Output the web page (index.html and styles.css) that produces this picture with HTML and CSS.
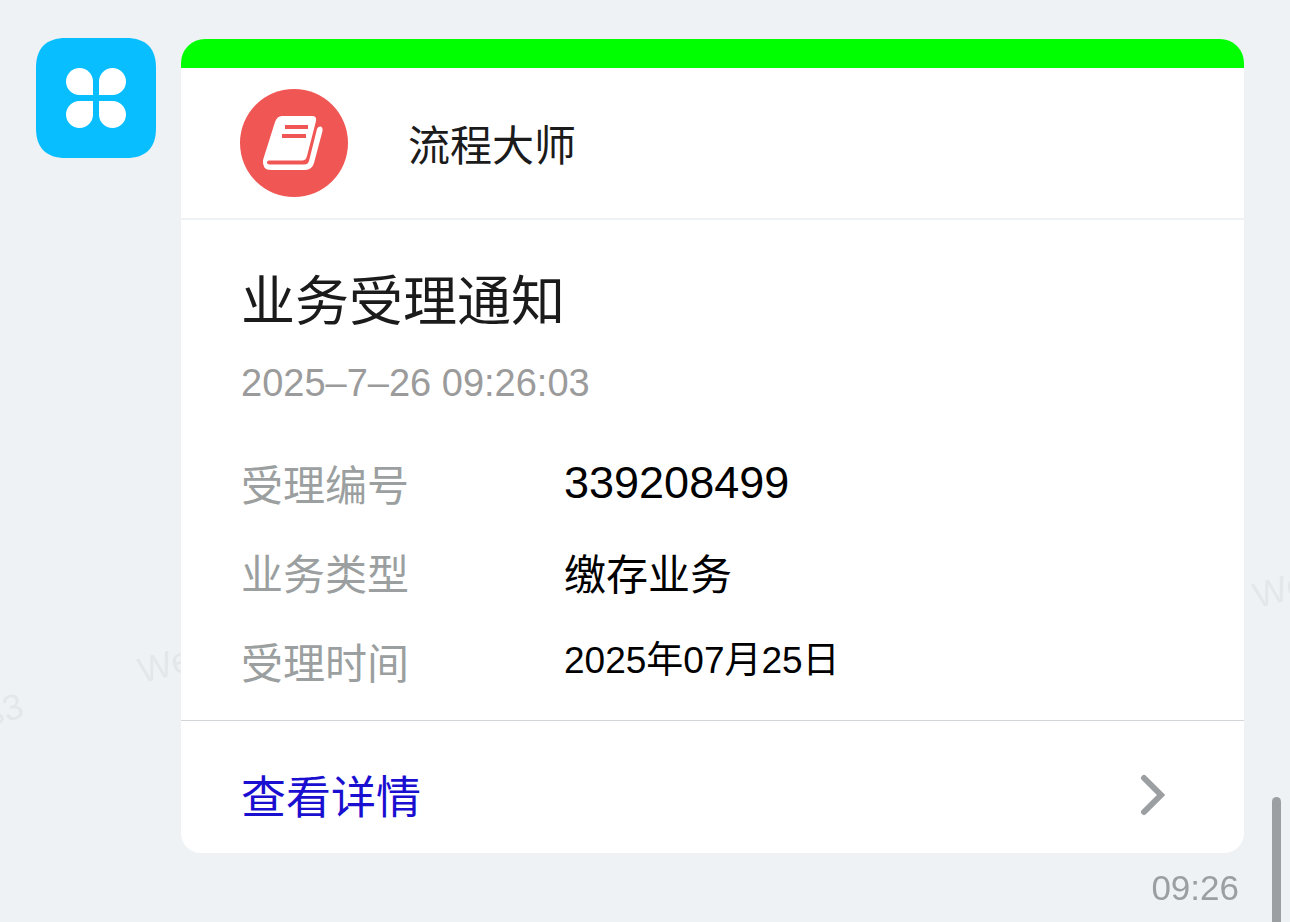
FILE: index.html
```html
<!DOCTYPE html>
<html lang="zh-CN">
<head>
<meta charset="utf-8">
<meta name="viewport" content="width=device-width, initial-scale=1">
<title>业务受理通知</title>
<link rel="stylesheet" href="styles.css">
</head>
<body>
<div class="watermarks" aria-hidden="true">
  <span class="mark mark-left">We</span>
  <span class="mark mark-edge">s3</span>
  <span class="mark mark-right">We</span>
</div>
<main class="chat">
  <svg class="avatar" viewBox="0 0 120 120" role="img" aria-label="应用">
    <path fill="#08beff" d="M30 0H90C110 0 120 10 120 30V90C120 110 110 120 90 120H30C10 120 0 110 0 90V30C0 10 10 0 30 0Z"/>
    <g fill="#fff">
      <path d="M57 57H43.500A13.500 13.500 0 1 1 57 43.500Z"/>
      <path d="M63 57V43.500A13.500 13.500 0 1 1 76.500 57Z"/>
      <path d="M57 63V76.500A13.500 13.500 0 1 1 43.500 63Z"/>
      <path d="M63 63H76.500A13.500 13.500 0 1 1 63 76.500Z"/>
    </g>
  </svg>
  <div class="message">
    <article class="card">
      <header class="card-head">
        <svg class="app-icon" viewBox="0 0 108 108" aria-hidden="true">
          <circle cx="54" cy="54" r="54" fill="#f05654"/>
          <path fill="#fff" d="M42 27H72Q77 27 76 32L67 67Q66 71.500 62 71.500H29Q27 71.500 27 73.500Q27 75.500 31 75.500H64Q68 75.500 69 72L77 40Q78 37 80.500 37.500Q83 38 82.500 42L74 74Q72 81 65 81H31Q22 81 23 71L35 33Q37 27 42 27Z"/>
          <path fill="none" stroke="#f05654" stroke-width="4" stroke-linejoin="round" d="M45 38H68M42 47H66"/>
        </svg>
        <span class="app-name">流程大师</span>
      </header>
      <section class="card-body">
        <h1 class="title">业务受理通知</h1>
        <time class="stamp" datetime="2025-07-26T09:26:03">2025–7–26 09:26:03</time>
        <dl class="fields">
          <dt>受理编号</dt><dd class="number">339208499</dd>
          <dt>业务类型</dt><dd class="kind">缴存业务</dd>
          <dt>受理时间</dt><dd class="date">2025年07月25日</dd>
        </dl>
      </section>
      <a class="details" href="#details">
        <span>查看详情</span>
        <svg class="chevron" viewBox="0 0 26 42" aria-hidden="true"><path d="M4 4L21 21L4 38" fill="none" stroke="#9b9fa2" stroke-width="6" stroke-linecap="round" stroke-linejoin="miter"/></svg>
      </a>
    </article>
    <time class="sent" datetime="09:26">09:26</time>
  </div>
</main>
<div class="scroll-thumb"></div>
</body>
</html>
```
FILE: styles.css
```css
* { box-sizing: border-box; }

body {
  margin: 0;
  background: #eef2f5;
  color: #1b1b1b;
  font-family: "Liberation Sans", "Noto Sans CJK SC", sans-serif;
  font-size: 42px;
  line-height: 60px;
}

.chat {
  position: relative;
  display: flex;
  align-items: flex-start;
  gap: 25px;
  padding: 38px 46px 0 36px;
}

.avatar {
  flex: none;
  width: 120px;
  height: 120px;
}

.message {
  flex: 1;
  min-width: 0;
  display: flex;
  flex-direction: column;
  padding-top: 1px;
}

.card {
  overflow: hidden;
  border-top: 29px solid #0f0;
  border-radius: 24px 24px 20px 20px;
  background: #fff;
}

.app-name,
.fields dt,
.fields .kind,
.details {
  font-family: "Noto Sans CJK SC", sans-serif;
}

.card-head {
  display: flex;
  align-items: center;
  gap: 60px;
  padding: 21px 59px;
  border-bottom: 2px solid #eef2f5;
}

.app-icon {
  flex: none;
  width: 108px;
  height: 108px;
}

.card-body {
  padding: 42px 60px 29px;
  border-bottom: 1px solid #d3d6d8;
}

.title {
  margin: 0;
  font-size: 54px;
  font-weight: 400;
  line-height: 80px;
}

.stamp {
  display: block;
  margin: 11px 0 40px;
  color: #9b9b9b;
  font-size: 38px;
}

.fields {
  display: grid;
  grid-template-columns: 323px 1fr;
  row-gap: 29px;
  margin: 0;
}

.fields dt { color: #9b9fa0; }

.fields dd {
  margin: 0;
  color: #000;
}

.fields .number { font-size: 45px; }

.fields .date { font-size: 37px; }

.details {
  display: flex;
  align-items: center;
  justify-content: space-between;
  padding: 44px 78px 28px 60px;
  color: #1a0fd0;
  font-size: 45px;
  text-decoration: none;
}

.chevron {
  flex: none;
  width: 26px;
  height: 42px;
}

.sent {
  align-self: flex-end;
  padding: 5px 5px 0 0;
  color: #9b9fa2;
  font-size: 35px;
}

.watermarks {
  position: fixed;
  inset: 0;
  overflow: hidden;
  color: #e3e7ea;
  font-size: 36px;
}

.mark {
  position: absolute;
  line-height: 40px;
  transform: rotate(-15deg);
}

.mark-left { top: 645px; left: 138px; }
.mark-edge { top: 690px; left: -15px; }
.mark-right { top: 570px; left: 1253px; }

.scroll-thumb {
  position: fixed;
  top: 797px;
  right: 9px;
  bottom: 0;
  width: 9px;
  border-radius: 5px 5px 0 0;
  background: #9b9fa2;
}
```
